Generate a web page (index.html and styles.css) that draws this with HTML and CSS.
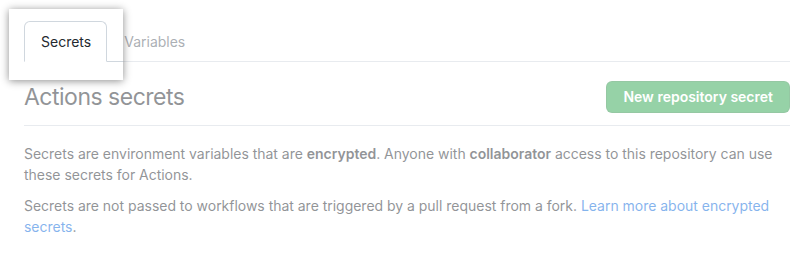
FILE: index.html
```html
<!DOCTYPE html>
<html>
<head>
<meta charset="utf-8">
<link rel="stylesheet" href="styles.css">
</head>
<body>
<div class="page">
  <nav class="tabnav">
    <a class="tab selected">Secrets</a>
    <a class="tab">Variables</a>
  </nav>
  <div class="subhead">
    <h2 class="subhead-heading">Actions secrets</h2>
    <div class="subhead-actions"><button class="btn-primary">New repository secret</button></div>
  </div>
  <p>Secrets are environment variables that are <strong>encrypted</strong>. Anyone with <strong>collaborator</strong> access to this repository can use these secrets for Actions.</p>
  <p>Secrets are not passed to workflows that are triggered by a pull request from a fork. <a class="link" href="#">Learn more about encrypted secrets</a>.</p>
  <div class="spotlight"></div>
</div>
</body>
</html>
```
FILE: styles.css
```css
* { box-sizing: border-box; }
html, body { margin: 0; padding: 0; background: #fff; }
body {
  font-family: Inter, "Noto Sans", "Liberation Sans", sans-serif;
  font-size: 14px;
  line-height: 1.5;
  color: #24292f;
  width: 812px;
  height: 257px;
  overflow: hidden;
}
.page {
  position: relative;
  margin-left: 24px;
  width: 766px;
  padding-top: 21px;
  height: 257px;
}
.tabnav {
  display: flex;
  border-bottom: 1px solid #d0d7de;
  margin-bottom: 16px;
}
.tab {
  padding: 8px 16px;
  font-size: 14px;
  line-height: 23px;
  color: #57606a;
  border: 1px solid transparent;
  border-radius: 6px 6px 0 0;
  margin-bottom: -1px;
}
.tab.selected {
  color: #24292f;
  border-color: #d0d7de;
  border-bottom-color: #fff;
  background: #fff;
  padding-right: 15px;
}
.subhead {
  display: flex;
  padding-bottom: 8px;
  margin-bottom: 17px;
  border-bottom: 1px solid #d0d7de;
}
.subhead-heading {
  flex: 1 1 auto;
  margin: 0;
  font-size: 23px;
  letter-spacing: -0.5px;
  font-weight: 400;
  line-height: 38px;
}
.subhead-actions {
  margin: 3px 0 4px 4px;
  align-self: center;
}
.btn-primary {
  font-family: inherit;
  font-size: 14px;
  font-weight: 600;
  line-height: 20px;
  padding: 5px 16px;
  color: #fff;
  background: #2da44e;
  border: 1px solid rgba(27,31,36,0.15);
  border-radius: 6px;
}
p { margin: 0 0 10px; letter-spacing: -0.02px; }
strong { font-weight: 600; }
.link { color: #0969da; text-decoration: none; }
.spotlight {
  position: absolute;
  left: -15px;
  top: 9px;
  width: 114px;
  height: 71px;
  box-shadow: 0 1px 8px rgba(0,0,0,0.45), 0 0 0 3000px rgba(255,255,255,0.5);
  pointer-events: none;
}
```
